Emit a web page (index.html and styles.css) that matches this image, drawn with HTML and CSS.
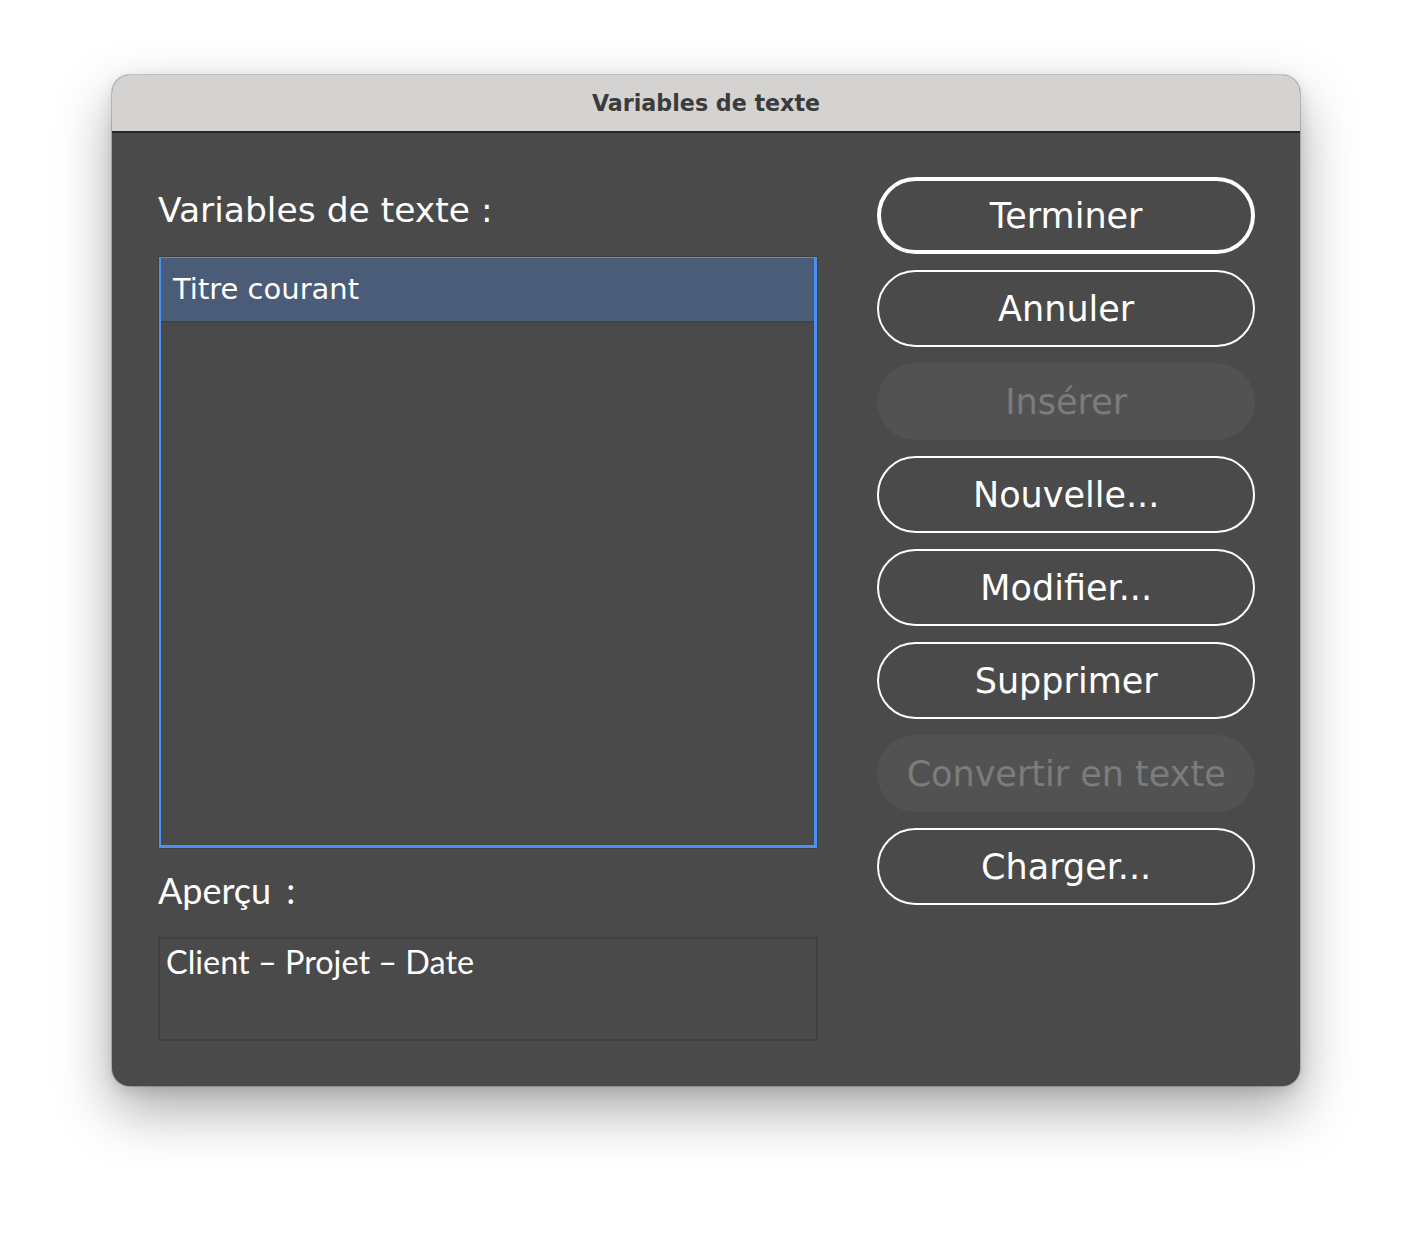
FILE: index.html
```html
<!DOCTYPE html>
<html lang="fr">
<head>
<meta charset="utf-8">
<title>Variables de texte</title>
<link rel="stylesheet" href="styles.css">
</head>
<body>
<div class="window">
  <div class="titlebar">Variables de texte</div>
  <div class="content">
    <div class="left">
      <div class="label">Variables de texte :</div>
      <div class="list">
        <div class="list-inner">
          <div class="row selected">Titre courant</div>
        </div>
      </div>
      <div class="label2">Aperçu :</div>
      <div class="preview">Client – Projet – Date</div>
    </div>
    <div class="buttons">
      <div class="btn default">Terminer</div>
      <div class="btn">Annuler</div>
      <div class="btn disabled">Insérer</div>
      <div class="btn">Nouvelle...</div>
      <div class="btn">Modifier...</div>
      <div class="btn">Supprimer</div>
      <div class="btn disabled">Convertir en texte</div>
      <div class="btn">Charger...</div>
    </div>
  </div>
</div>
</body>
</html>
```
FILE: styles.css
```css
html, body {
  margin: 0;
  padding: 0;
  background: #ffffff;
}
body {
  padding: 75px 0 148px 112px;
  font-family: "DejaVu Sans", "Verdana", sans-serif;
}
.window {
  width: 1188px;
  height: 1011px;
  border-radius: 18px;
  background: #4a4a4a;
  overflow: hidden;
  box-shadow: 0 0 0 1px rgba(0,0,0,0.18), 0 24px 55px rgba(0,0,0,0.34), 0 4px 14px rgba(0,0,0,0.12);
  box-sizing: border-box;
}
.titlebar {
  height: 56px;
  background: #d4d3d1;
  border-bottom: 2px solid #262626;
  display: flex;
  align-items: center;
  justify-content: center;
  font-weight: bold;
  font-size: 22.2px;
  color: #3b3b3b;
}
.content {
  display: flex;
  gap: 59px;
  padding: 44px 45px 0 46px;
}
.left {
  width: 661px;
  display: flex;
  flex-direction: column;
}
.label {
  margin-top: 13px;
  font-size: 34.5px;
  line-height: 40px;
  color: #ffffff;
}
.list {
  margin-top: 26px;
  height: 593px;
  border: 1px solid #404040;
  box-sizing: border-box;
}
.list-inner {
  height: 100%;
  box-sizing: border-box;
  border-style: solid;
  border-color: #4a8ff4;
  border-width: 1px 3px 3px 2px;
}
.row {
  height: 63px;
  line-height: 63px;
  padding-left: 12px;
  font-size: 29px;
  color: #ffffff;
  border-bottom: 2px solid #434343;
}
.row.selected {
  background: #4a5c77;
}
.label2 {
  margin-top: 20px;
  font-family: Lato, "Liberation Sans", sans-serif;
  font-size: 36px;
  line-height: 42px;
  word-spacing: 6px;
  color: #ffffff;
}
.preview {
  margin-top: 26px;
  width: 660px;
  height: 104px;
  box-sizing: border-box;
  border: 2px solid #404040;
  padding: 3px 0 0 6px;
  font-family: Lato, "Liberation Sans", sans-serif;
  font-size: 32.4px;
  line-height: 40px;
  color: #ffffff;
}
.buttons {
  width: 378px;
  display: flex;
  flex-direction: column;
  gap: 16px;
}
.btn {
  height: 77px;
  box-sizing: border-box;
  border: 2px solid #ffffff;
  border-radius: 39px;
  display: flex;
  align-items: center;
  justify-content: center;
  font-size: 35px;
  color: #ffffff;
}
.btn.default {
  border-width: 4px;
}
.btn.disabled {
  border-color: transparent;
  background: #525252;
  color: #7c7c7c;
}
```
